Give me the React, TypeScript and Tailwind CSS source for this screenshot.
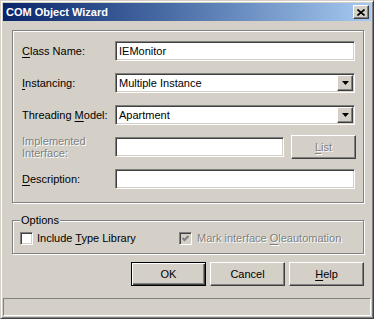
const raised =
  "border border-t-white border-l-white border-r-[#404040] border-b-[#404040] shadow-[inset_-1px_-1px_0_#808080,inset_1px_1px_0_#d4d0c8] bg-[#d4d0c8]";
const sunken =
  "border border-t-[#808080] border-l-[#808080] border-r-white border-b-white shadow-[inset_1px_1px_0_#404040,inset_-1px_-1px_0_#d4d0c8]";
const etched = "border border-[#808080] shadow-[inset_1px_1px_0_#fff,1px_1px_0_#fff]";
const disabledText = "text-[#808080] [text-shadow:1px_1px_0_#fff]";

const Key = ({ children }: { children: string }) => <span className="underline underline-offset-[2px]">{children}</span>;

const TextField = ({ value, width }: { value?: string; width: string }) => (
  <div className={`${sunken} ${width} h-[20px] bg-white flex items-center pl-[3px]`}>{value}</div>
);

const Select = ({ value }: { value: string }) => (
  <div className={`${sunken} w-[240px] h-[20px] bg-white flex items-center justify-between pl-[3px] pr-[1px]`}>
    <span>{value}</span>
    <div className={`${raised} w-[16px] h-[16px] flex items-center justify-center`}>
      <svg width="7" height="4" viewBox="0 0 7 4">
        <polygon points="0,0 7,0 3.5,4" fill="#000" />
      </svg>
    </div>
  </div>
);

const Row = ({ label, children }: { label: React.ReactNode; children: React.ReactNode }) => (
  <div className="flex items-center h-[20px]">
    <div className="w-[93px] shrink-0">{label}</div>
    {children}
  </div>
);

const Check = ({ checked, disabled }: { checked?: boolean; disabled?: boolean }) => (
  <div className={`${sunken} w-[13px] h-[13px] shrink-0 flex items-center justify-center ${disabled ? "bg-[#d4d0c8]" : "bg-white"}`}>
    {checked && (
      <svg width="7" height="7" viewBox="0 0 7 7">
        <polyline points="0.5,3 2.5,5 6.5,1" fill="none" stroke={disabled ? "#808080" : "#000"} strokeWidth="2" />
      </svg>
    )}
  </div>
);

export default function App() {
  return (
    <div
      className="w-[374px] h-[319px] flex flex-col bg-[#d4d0c8] border border-t-[#d4d0c8] border-l-[#d4d0c8] border-r-[#404040] border-b-[#404040] shadow-[inset_1px_1px_0_#fff,inset_-1px_-1px_0_#808080] p-[2px] text-[11px] leading-[13px] text-black"
      style={{ fontFamily: '"Liberation Sans", Arial, sans-serif' }}
    >
      {/* title bar */}
      <div className="h-[18px] shrink-0 flex items-center justify-between pl-[3px] pr-[2px] bg-linear-to-r from-[#0a246a] to-[#a6caf0]">
        <span className="text-white font-bold text-[11px]">COM Object Wizard</span>
        <div className={`${raised} w-[16px] h-[14px] flex items-center justify-center`}>
          <svg width="8" height="7" viewBox="0 0 8 7">
            <path d="M0.5 0.5 L7.5 6.5 M7.5 0.5 L0.5 6.5" stroke="#000" strokeWidth="1.6" />
          </svg>
        </div>
      </div>

      <div className="flex-1 flex flex-col pl-[9px] pr-[7px]">
        {/* main group */}
        <div className={`${etched} mt-[9px] h-[173px] pt-[10px] pl-[9px] flex flex-col gap-[12px]`}>
          <Row label={<><Key>C</Key>lass Name:</>}>
            <TextField value="IEMonitor" width="w-[240px]" />
          </Row>
          <Row label={<><Key>I</Key>nstancing:</>}>
            <Select value="Multiple Instance" />
          </Row>
          <Row label={<>Threading <Key>M</Key>odel:</>}>
            <Select value="Apartment" />
          </Row>
          <Row label={<div className={`${disabledText} leading-[12px]`}>Implemented<br />Interface:</div>}>
            <TextField width="w-[169px]" />
            <div className={`${raised} ml-[7px] w-[65px] h-[24px] shrink-0 flex items-center justify-center ${disabledText}`}>
              <span><Key>L</Key>ist</span>
            </div>
          </Row>
          <Row label={<><Key>D</Key>escription:</>}>
            <TextField width="w-[240px]" />
          </Row>
        </div>

        {/* options group */}
        <div className={`${etched} relative mt-[17px] h-[34px] pt-[11px] pl-[7px] flex`}>
          <span className="absolute -top-[7px] left-[7px] px-[1px] bg-[#d4d0c8]">Options</span>
          <div className="w-[159px] flex items-center gap-[4px] h-[13px]">
            <Check />
            <span>Include <Key>T</Key>ype Library</span>
          </div>
          <div className="flex items-center gap-[5px] h-[13px]">
            <Check checked disabled />
            <span className={disabledText}>Mark interface <Key>O</Key>leautomation</span>
          </div>
        </div>

        {/* buttons */}
        <div className="mt-[8px] flex justify-end gap-[4px]">
          <div className="w-[75px] h-[24px] border border-black shadow-[inset_1px_1px_0_#fff,inset_-1px_-1px_0_#404040,inset_-2px_-2px_0_#808080] flex items-center justify-center">
            OK
          </div>
          <div className={`${raised} w-[75px] h-[24px] flex items-center justify-center`}>Cancel</div>
          <div className={`${raised} w-[75px] h-[24px] flex items-center justify-center`}>
            <span><Key>H</Key>elp</span>
          </div>
        </div>
      </div>

      {/* status bar */}
      <div className="h-[18px] shrink-0 border border-t-[#808080] border-l-[#808080] border-r-white border-b-white" />
    </div>
  );
}
